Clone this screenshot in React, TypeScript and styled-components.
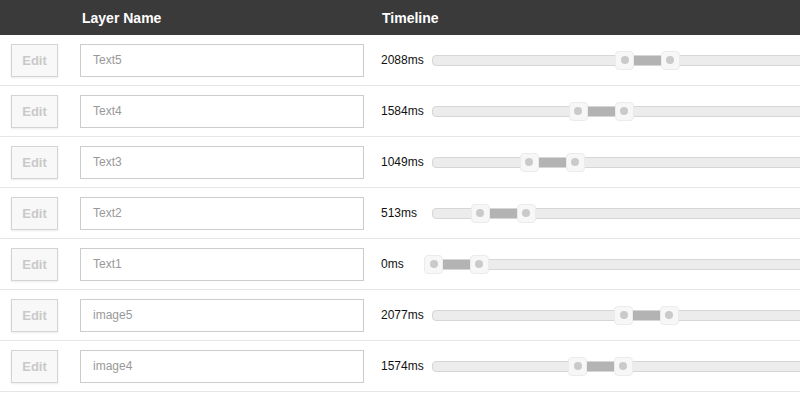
import React from "react";
import styled, { createGlobalStyle } from "styled-components";

const GlobalStyle = createGlobalStyle`
  html, body {
    margin: 0;
    padding: 0;
    overflow: hidden;
    background: #fff;
    font-family: "Liberation Sans", Arial, sans-serif;
  }
`;

const PX_PER_MS = 0.0915;
const CLIP_MS = 500;

interface Layer {
  name: string;
  start: number;
}

const layers: Layer[] = [
  { name: "Text5", start: 2088 },
  { name: "Text4", start: 1584 },
  { name: "Text3", start: 1049 },
  { name: "Text2", start: 513 },
  { name: "Text1", start: 0 },
  { name: "image5", start: 2077 },
  { name: "image4", start: 1574 },
];

const Table = styled.div`
  width: 800px;
  overflow: hidden;
`;

const HeaderRow = styled.div`
  display: grid;
  grid-template-columns: 70px 302px 1fr;
  height: 35px;
  align-items: center;
  background: #3a3a3a;
  color: #fff;
  font-weight: bold;
  font-size: 14px;
`;

const HeaderCell = styled.div<{ $pad: number }>`
  padding-left: ${(p) => p.$pad}px;
  white-space: nowrap;
`;

const Row = styled.div`
  display: grid;
  grid-template-columns: 69px 303px 1fr;
  align-items: center;
  height: 50px;
  border-bottom: 1px solid #e6e6e6;
`;

const Cell = styled.div<{ $pad: number }>`
  display: flex;
  align-items: center;
  padding-left: ${(p) => p.$pad}px;
  min-width: 0;
`;

const EditButton = styled.button`
  width: 47px;
  height: 33px;
  padding: 0;
  border: 1px solid #d4d4d4;
  background: #f8f8f8;
  box-shadow: 0 1px 2px rgba(0, 0, 0, 0.08);
  color: #c9c9c9;
  font-family: "Liberation Sans", Arial, sans-serif;
  font-weight: bold;
  font-size: 13px;
`;

const NameInput = styled.input`
  box-sizing: border-box;
  width: 284px;
  height: 33px;
  border: 1px solid #cccccc;
  padding: 0 12px;
  font-family: "Liberation Sans", Arial, sans-serif;
  font-size: 12px;
  color: #999;
  outline: none;
`;

const TimeLabel = styled.span`
  width: 51px;
  flex: none;
  font-size: 12px;
  color: #111;
`;

const Track = styled.div`
  position: relative;
  flex: none;
  width: 470px;
  height: 9px;
  border: 1px solid #d6d6d6;
  border-radius: 4px;
  background: #ececec;
`;

const Range = styled.div`
  position: absolute;
  top: 0;
  height: 9px;
  background: #b3b3b3;
`;

const Handle = styled.div`
  position: absolute;
  top: -5px;
  width: 19px;
  height: 19px;
  margin-left: -10px;
  box-sizing: border-box;
  border: 1px solid #ebebeb;
  border-radius: 4px;
  background: #f7f7f7;
  display: flex;
  align-items: center;
  justify-content: center;

  &::after {
    content: "";
    width: 8px;
    height: 8px;
    border-radius: 50%;
    background: #cacaca;
  }
`;

const Slider = ({ start }: { start: number }) => {
  const a = 1 + start * PX_PER_MS;
  const b = 1 + (start + CLIP_MS) * PX_PER_MS;
  return (
    <Track>
      <Range style={{ left: a, width: b - a }} />
      <Handle style={{ left: a }} />
      <Handle style={{ left: b }} />
    </Track>
  );
};

export default function App() {
  return (
    <>
      <GlobalStyle />
      <Table>
        <HeaderRow>
          <HeaderCell $pad={0} />
          <HeaderCell $pad={12}>Layer Name</HeaderCell>
          <HeaderCell $pad={10}>Timeline</HeaderCell>
        </HeaderRow>
        {layers.map((l) => (
          <Row key={l.name}>
            <Cell $pad={11}>
              <EditButton>Edit</EditButton>
            </Cell>
            <Cell $pad={11}>
              <NameInput defaultValue={l.name} />
            </Cell>
            <Cell $pad={9}>
              <TimeLabel>{l.start}ms</TimeLabel>
              <Slider start={l.start} />
            </Cell>
          </Row>
        ))}
      </Table>
    </>
  );
}
